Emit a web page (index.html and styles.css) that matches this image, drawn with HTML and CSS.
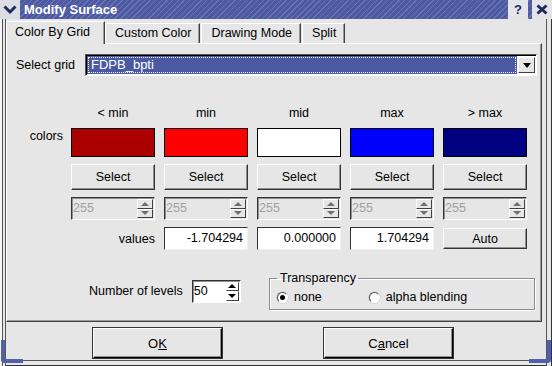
FILE: index.html
```html
<!DOCTYPE html>
<html lang="en">

<head>
    <meta charset="UTF-8">
    <meta name="viewport" content="width=device-width, initial-scale=1.0">
    <title>Modify Surface</title>
    <link rel="stylesheet" href="styles.css">
</head>

<body>
    <div class="window">
        <div class="titlebar">
            <div class="tb-menu">
                <svg width="14" height="10" viewBox="0 0 14 10"><path d="M1.5 1.5 L7 7 L12.5 1.5" fill="none" stroke="#1f2a5c" stroke-width="3"/></svg>
            </div>
            <div class="tb-title">Modify Surface</div>
            <div class="tb-btn tb-help">?</div>
            <div class="tb-btn tb-close">
                <svg width="12" height="11" viewBox="0 0 12 11"><path d="M1.5 1.5 L10.5 9.5 M10.5 1.5 L1.5 9.5" stroke="#1f2a5c" stroke-width="3"/></svg>
            </div>
        </div>

        <div class="frame">
            <div class="tabs">
                <div class="tab active">Color By Grid</div>
                <div class="tab">Custom Color</div>
                <div class="tab">Drawing Mode</div>
                <div class="tab">Split</div>
            </div>

            <div class="pane">
                <div class="grid-row">
                    <span class="grid-label">Select grid</span>
                    <div class="combo">
                        <div class="combo-field">FDPB_bpti</div>
                        <div class="combo-btn"><span class="arrow-down"></span></div>
                    </div>
                </div>

                <div class="colgrid">
                    <span></span>
                    <span class="head">&lt; min</span>
                    <span class="head">min</span>
                    <span class="head">mid</span>
                    <span class="head">max</span>
                    <span class="head">&gt; max</span>

                    <span class="row-label top">colors</span>
                    <div class="swatch sw-below"></div>
                    <div class="swatch sw-min"></div>
                    <div class="swatch sw-mid"></div>
                    <div class="swatch sw-max"></div>
                    <div class="swatch sw-above"></div>

                    <span></span>
                    <button class="btn">Select</button>
                    <button class="btn">Select</button>
                    <button class="btn">Select</button>
                    <button class="btn">Select</button>
                    <button class="btn">Select</button>

                    <span></span>
                    <div class="spin disabled"><span class="spin-text">255</span><span class="spin-btns"><span class="sb up"></span><span class="sb down"></span></span></div>
                    <div class="spin disabled"><span class="spin-text">255</span><span class="spin-btns"><span class="sb up"></span><span class="sb down"></span></span></div>
                    <div class="spin disabled"><span class="spin-text">255</span><span class="spin-btns"><span class="sb up"></span><span class="sb down"></span></span></div>
                    <div class="spin disabled"><span class="spin-text">255</span><span class="spin-btns"><span class="sb up"></span><span class="sb down"></span></span></div>
                    <div class="spin disabled"><span class="spin-text">255</span><span class="spin-btns"><span class="sb up"></span><span class="sb down"></span></span></div>

                    <span></span>
                    <span class="row-label">values</span>
                    <div class="field">-1.704294</div>
                    <div class="field">0.000000</div>
                    <div class="field">1.704294</div>
                    <button class="btn btn-auto">Auto</button>
                </div>

                <div class="bottom-row">
                    <span class="levels-label">Number of levels</span>
                    <div class="spin levels"><span class="spin-text">50</span><span class="spin-btns"><span class="sb up"></span><span class="sb down"></span></span></div>
                    <fieldset class="group">
                        <legend>Transparency</legend>
                        <label class="radio"><span class="radio-dot checked"></span>none</label>
                        <label class="radio"><span class="radio-dot"></span>alpha blending</label>
                    </fieldset>
                </div>
            </div>

            <div class="actions">
                <button class="btn btn-big">O<u>K</u></button>
                <button class="btn btn-big">C<u>a</u>ncel</button>
            </div>

            <span class="grip grip-left"></span>
            <span class="grip grip-right"></span>
        </div>
    </div>
</body>

</html>
```

FILE: styles.css
```css
* {
    box-sizing: border-box;
}

body {
    margin: 0;
    font-family: "Liberation Sans", Arial, sans-serif;
    font-size: 12.5px;
    color: #000;
    background-color: #e6e6e6;
}

.window {
    width: 552px;
    height: 366px;
    display: flex;
    flex-direction: column;
    background-color: #e6e6e6;
}

/* title bar */

.titlebar {
    height: 19px;
    display: flex;
    align-items: stretch;
    color: white;
    background: repeating-linear-gradient(135deg, #4d5aa2 0 2px, #6874b6 2px 3px, #4d5aa2 3px 4px);
}

.tb-menu {
    width: 20px;
    display: flex;
    align-items: center;
    justify-content: center;
    background-color: #dcdde4;
}

.tb-title {
    flex-grow: 1;
    padding-left: 4px;
    font-weight: bold;
    font-size: 13px;
    line-height: 19px;
}

.tb-btn {
    width: 20px;
    display: flex;
    align-items: center;
    justify-content: center;
    background-color: #e4e4e8;
    color: #1f2a5c;
    font-weight: bold;
    font-size: 13px;
}

.tb-help {
    margin-right: 4px;
}

/* window frame */

.frame {
    position: relative;
    flex-grow: 1;
    display: flex;
    flex-direction: column;
    padding: 2px 6px 6px 6px;
    box-shadow:
        inset 2px 0 0 #f6f6f6,
        inset 3px 0 0 #555,
        inset 5px 0 0 #e6e6e6,
        inset 6px 0 0 #555,
        inset -1px 0 0 #333,
        inset -5px 0 0 #e6e6e6,
        inset -6px 0 0 #555,
        inset 0 -1px 0 #333,
        inset 0 -5px 0 #e6e6e6,
        inset 0 -6px 0 #555;
}

.grip {
    position: absolute;
    bottom: 3px;
    width: 22px;
    height: 23px;
    border: 0 solid #5260aa;
}

.grip-left {
    left: 1px;
    border-width: 0 0 4px 4px;
    border-bottom-left-radius: 4px;
}

.grip-right {
    right: 1px;
    border-width: 0 4px 4px 0;
    border-bottom-right-radius: 4px;
}

/* tabs */

.tabs {
    display: flex;
    align-items: flex-end;
    height: 22px;
}

.tab {
    height: 20px;
    padding: 0 8px 0 9px;
    margin-right: 1px;
    line-height: 19px;
    border: 1px solid;
    border-bottom: none;
    border-color: #fff #404040 #404040 #fff;
    box-shadow: inset -1px 0 0 #9a9a9a;
}

.tab.active {
    position: relative;
    z-index: 1;
    height: 23px;
    margin-bottom: -1px;
    padding: 0 14px 0 8px;
    margin-right: 0;
    line-height: 21px;
    background-color: #e6e6e6;
}

.pane {
    height: 279px;
    padding: 10px 4px 0 9px;
    border: 1px solid;
    border-color: #fff #404040 #404040 #fff;
    box-shadow: inset -1px -1px 0 #9a9a9a;
    margin-right: 4px;
}

/* select grid */

.grid-row {
    display: flex;
    align-items: center;
    height: 22px;
}

.grid-label {
    width: 69px;
}

.combo {
    flex-grow: 1;
    display: flex;
    height: 22px;
    padding: 1px;
    background-color: #fff;
    border: 1px solid;
    border-color: #555 #fff #fff #555;
    box-shadow: inset 1px 1px 0 #000;
}

.combo-field {
    flex-grow: 1;
    padding-left: 4px;
    line-height: 18px;
    color: white;
    background-color: #4b59a3;
    outline: 1px dotted #fff;
    outline-offset: -2px;
    font-size: 13px;
}

.combo-btn {
    width: 17px;
    margin: 1px 0 1px 1px;
    display: flex;
    align-items: center;
    justify-content: center;
    background-color: #e6e6e6;
    border: 1px solid;
    border-color: #fff #404040 #404040 #fff;
}

.arrow-down {
    border-left: 4px solid transparent;
    border-right: 4px solid transparent;
    border-top: 5px solid #000;
}

/* color columns */

.colgrid {
    display: grid;
    grid-template-columns: 46px repeat(5, 84px);
    grid-template-rows: 15px 29px 26px 23px 23px;
    column-gap: 9px;
    row-gap: 7px;
    margin-top: 30px;
}

.head {
    text-align: center;
    line-height: 15px;
}

.row-label {
    text-align: right;
    align-self: center;
}

.row-label.top {
    align-self: start;
    padding-top: 1px;
    margin-right: -1px;
}

.swatch {
    border: 1px solid #000;
}

.sw-below { background-color: #aa0000; }
.sw-min { background-color: #ff0000; }
.sw-mid { background-color: #ffffff; }
.sw-max { background-color: #0000ff; }
.sw-above { background-color: #000080; }

.btn {
    padding: 0;
    font-family: inherit;
    font-size: 12.5px;
    color: #000;
    background-color: #e6e6e6;
    border: 1px solid;
    border-color: #fff #333 #333 #fff;
    box-shadow: inset -1px -1px 0 #909090;
}

.btn-auto {
    height: 21px;
    margin-top: 1px;
}

.spin {
    display: flex;
    align-items: stretch;
    border: 1px solid;
    border-color: #333 #fff #fff #333;
    box-shadow: inset 1px 1px 0 #909090;
}

.spin-text {
    flex-grow: 1;
    padding-left: 1px;
    line-height: 21px;
}

.spin.disabled .spin-text {
    color: #a0a0a0;
}

.spin-btns {
    width: 16px;
    margin: 1px 1px 1px 0;
    display: flex;
    flex-direction: column;
}

.sb {
    flex: 1;
    display: flex;
    align-items: center;
    justify-content: center;
    border: 1px solid;
    border-color: #fff #404040 #404040 #fff;
}

.sb::before {
    content: "";
    border-left: 4px solid transparent;
    border-right: 4px solid transparent;
}

.sb.up::before {
    border-bottom: 4px solid #000;
}

.sb.down::before {
    border-top: 4px solid #000;
}

.spin.disabled .sb.up::before {
    border-bottom-color: #707070;
}

.spin.disabled .sb.down::before {
    border-top-color: #707070;
}

.field {
    padding-right: 4px;
    text-align: right;
    line-height: 21px;
    background-color: #fff;
    border: 1px solid;
    border-color: #333 #f0f0f0 #f0f0f0 #333;
}

/* levels + transparency */

.bottom-row {
    display: flex;
    align-items: center;
    margin-top: 22px;
    padding-left: 73px;
}

.levels-label {
    margin-right: 9px;
}

.spin.levels {
    width: 49px;
    height: 23px;
    background-color: #fff;
}

.spin.levels .spin-btns {
    width: 13px;
}

.group {
    width: 266px;
    height: 38px;
    margin: 0 2px 0 auto;
    padding: 0 0 0 7px;
    display: flex;
    align-items: center;
    border: 1px solid #8c8c8c;
    box-shadow: 1px 1px 0 #fff, inset 1px 1px 0 #fff;
}

.group legend {
    padding: 0 2px 0 3px;
    margin-left: 0;
    line-height: 13px;
}

.radio {
    display: flex;
    align-items: center;
    margin-right: 47px;
}

.radio-dot {
    position: relative;
    width: 11px;
    height: 11px;
    margin-right: 6px;
    border-radius: 50%;
    background-color: #fff;
    border: 1px solid;
    border-color: #555 #fff #fff #555;
    box-shadow: 0 0 0 0.5px #bbb;
}

.radio-dot.checked::after {
    content: "";
    position: absolute;
    left: 2px;
    top: 2px;
    width: 5px;
    height: 5px;
    border-radius: 50%;
    background-color: #000;
}

/* dialog buttons */

.actions {
    display: flex;
    gap: 102px;
    padding: 6px 0 0 87px;
}

.btn-big {
    width: 129px;
    height: 30px;
    font-size: 13px;
    border-color: #fff #000 #000 #fff;
    box-shadow: inset -1px -1px 0 #909090, 0 0 0 1px #333;
}
```
